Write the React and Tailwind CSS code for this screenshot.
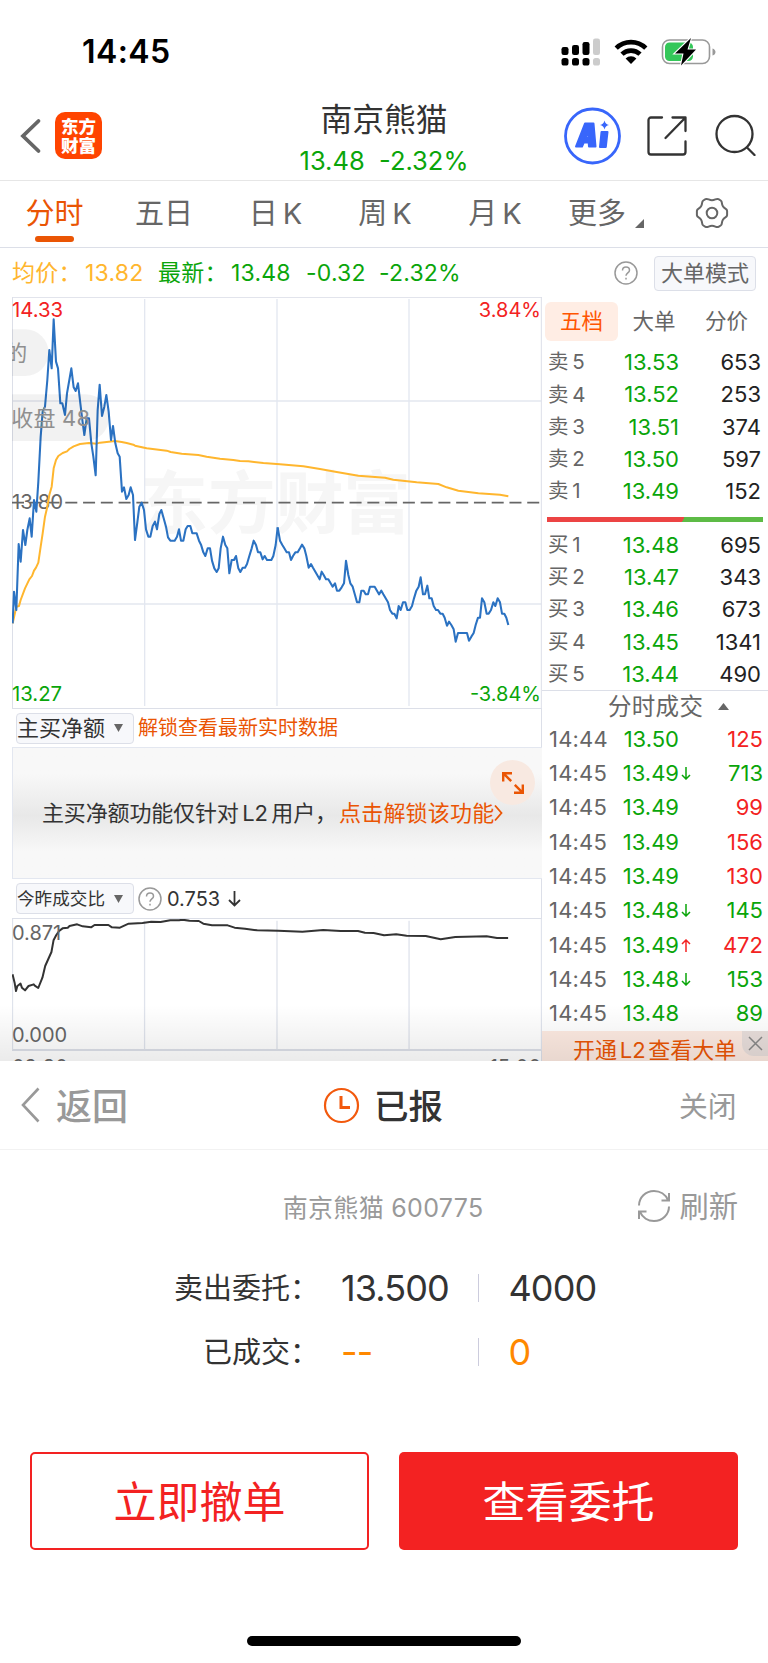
import { clsx } from 'clsx';

const periods = [
    { label: '分时', cell: 'w-[109px]', active: true },
    { label: '五日', cell: 'w-[110px]' },
    { label: '日 K', cell: 'w-[113px]' },
    { label: '周 K', cell: 'w-[106px]' },
    { label: '月 K', cell: 'w-[114px]' },
];

const asks = [
    ['卖 5', '13.53', '653'],
    ['卖 4', '13.52', '253'],
    ['卖 3', '13.51', '374'],
    ['卖 2', '13.50', '597'],
    ['卖 1', '13.49', '152'],
];

const bids = [
    ['买 1', '13.48', '695'],
    ['买 2', '13.47', '343'],
    ['买 3', '13.46', '673'],
    ['买 4', '13.45', '1341'],
    ['买 5', '13.44', '490'],
];

const trades = [
    { time: '14:44', price: '13.50', volume: '125', side: 'buy' },
    { time: '14:45', price: '13.49', volume: '713', side: 'sell', move: 'down' },
    { time: '14:45', price: '13.49', volume: '99', side: 'buy' },
    { time: '14:45', price: '13.49', volume: '156', side: 'buy' },
    { time: '14:45', price: '13.49', volume: '130', side: 'buy' },
    { time: '14:45', price: '13.48', volume: '145', side: 'sell', move: 'down' },
    { time: '14:45', price: '13.49', volume: '472', side: 'buy', move: 'up' },
    { time: '14:45', price: '13.48', volume: '153', side: 'sell', move: 'down' },
    { time: '14:45', price: '13.48', volume: '89', side: 'sell' },
];

// Intraday series, split at the lunch break
const priceMorning =
    '38,1000 42,905 49,960 56,762 62,815 69,720 76,765 82,720 89,685 95,740 102,630 109,665 115,575 122,440 128,365 135,350 142,270 148,180 155,235 161,88 168,215 174,235 181,340 187,340 195,375 201,310 208,270 214,235 221,292 227,303 234,280 241,340 247,390 253,435 260,385 267,385 274,460 280,500 287,556 293,360 299,284 306,378 313,350 319,315 326,365 333,450 339,408 346,460 353,490 359,500 366,605 372,592 379,627 386,615 392,592 399,615 405,750 412,697 418,650 425,638 432,660 438,718 445,740 451,740 458,708 465,695 471,718 478,672 484,660 491,685 498,710 504,742 511,752 524,752 531,740 537,718 543,752 550,752 557,718 563,708 571,708 577,730 590,730 597,752 603,764 610,787 616,798 623,775 630,775 636,812 643,835 650,846 656,835 662,775 669,740 676,765 682,775 688,850 695,810 702,810 708,798 715,835 721,846 728,833 735,833 741,822 748,798 755,775 761,752 768,765 774,787 781,787 788,808 794,798 801,810 814,810 820,798 827,765 833,712';
const priceAfternoon =
    '23,712 30,752 37,765 43,775 50,787 57,787 63,810 69,798 76,787 83,787 90,775 96,764 103,775 109,798 116,833 123,822 129,833 136,845 149,868 155,845 161,855 168,868 175,868 188,890 195,880 201,902 208,902 215,892 222,880 228,812 235,855 241,880 248,890 255,915 261,937 268,937 274,902 281,902 287,913 294,913 300,890 314,890 327,913 334,902 340,913 347,925 354,937 360,960 367,971 373,971 380,985 386,948 392,960 399,937 406,937 412,960 419,960 426,948 432,925 439,902 446,890 452,862 459,913 465,913 472,887 478,925 485,925 491,948 498,960 504,960 511,971 518,971 524,983 531,1007 537,995 544,1005 551,1018 557,1055 564,1029 591,1029 597,1052 604,1040 611,1029 617,1005 624,983 630,983 636,925 643,937 650,971 656,971 663,960 670,937 676,948 683,925 690,937 696,971 703,971 709,983 715,1005';
const averageMorning =
    '38,1000 49,950 57,948 62,930 75,895 88,868 96,858 102,842 108,833 115,818 122,770 128,730 135,680 142,650 148,615 155,590 161,535 168,510 175,498 188,489 201,484 208,477 221,469 240,462 267,459 290,461 300,458 320,456 345,453 365,456 380,459 400,464 405,467 440,475 500,482 512,486 545,491 595,495 620,500 660,506 700,510 720,513 745,514 790,519 840,523';
const averageAfternoon =
    '30,523 100,529 150,537 200,546 265,557 345,563 370,569 440,577 505,582 530,592 565,602 625,610 690,614 715,619';
const ratioSeries =
    '36,820 42,845 46,870 50,855 59,848 63,860 72,868 82,855 97,850 100,854 110,861 122,830 130,795 148,753 154,718 162,702 170,690 180,682 195,680 200,675 222,670 238,676 262,679 272,672 312,672 322,679 345,680 370,668 410,666 435,662 462,663 490,658 515,658 525,656 545,659 572,660 585,668 610,673 655,673 675,680 705,683 740,688 800,689 870,692 930,687 980,690 1030,690 1050,695 1075,696 1105,703 1140,700 1170,704 1225,705 1268,715 1310,708 1400,706 1430,711 1462,711';

function StatusBar() {
    return (
        <div className="flex h-[100px] items-center pl-[82px] pt-1">
            <span className="w-[479px] text-[32px] font-semibold leading-none tracking-[0.4px] text-black">14:45</span>
            <svg width="39" height="28" viewBox="0 0 39 28" className="-mt-[1px]">
                <g fill="#000">
                    <rect x="0.5" y="9" width="7" height="8" rx="2.2" />
                    <rect x="11" y="7" width="7" height="10" rx="2.2" />
                    <rect x="21.5" y="4" width="7" height="13" rx="2.2" />
                    <rect x="0.5" y="20" width="7" height="7.5" rx="2.6" />
                    <rect x="11" y="20" width="7" height="7.5" rx="2.6" />
                    <rect x="21.5" y="20" width="7" height="7.5" rx="2.6" />
                </g>
                <rect x="32" y="0.5" width="7" height="16.5" rx="2.2" fill="#ccc" />
                <rect x="32" y="20" width="7" height="7.5" rx="2.6" fill="#ccc" />
            </svg>
            <svg width="34" height="26" viewBox="0 0 34 26" className="ml-[14px]" fill="none" stroke="#000" strokeWidth="4.600">
                <path d="M2.200 9.200a21 21 0 0 1 29.600 0" />
                <path d="M8 15.200a13 13 0 0 1 18 0" />
                <path d="M17 25l-5.400-5.600a8 8 0 0 1 10.800 0z" fill="#000" stroke="none" />
            </svg>
            <svg width="56" height="28" viewBox="0 0 56 28" className="ml-[13px]">
                <rect x="1.500" y="2" width="47" height="23.500" rx="7" fill="none" stroke="#999" strokeWidth="1.600" />
                <path d="M51.500 10.500v7c2-.5 3-2 3-3.500s-1-3-3-3.500z" fill="#999" />
                <rect x="4" y="4.500" width="28" height="18.500" rx="4.500" fill="#34c759" />
                <path d="M30 0L14 15.500h8.500L20 27.500 35 11.500h-8.500z" fill="#000" stroke="#fff" strokeWidth="2.200" paintOrder="stroke" />
            </svg>
        </div>
    );
}

function Header() {
    return (
        <header className="flex h-[81px] items-start border-b border-[#e6e6e6]">
            <svg width="22" height="36" viewBox="0 0 22 36" className="ml-[20px] mt-[18px]" fill="none" stroke="#666" strokeWidth="3.800" strokeLinecap="round">
                <path d="M18.500 3L3 18l15.500 15" />
            </svg>
            <div className="ml-[13px] mt-[12px] flex h-[47px] w-[47px] flex-col items-center justify-center rounded-[10px] bg-[#ff4400] text-[17.500px] font-black leading-[19px] text-white">
                <span>东方</span>
                <span>财富</span>
            </div>
            <div className="ml-[191px] w-[182px] text-center">
                <h1 className="mt-[3px] text-[31.800px] leading-[34px] text-[#333]">南京熊猫</h1>
                <p className="mt-[9px] whitespace-pre text-[25.500px] leading-[30px] text-[#0aa50a]">13.48  -2.32%</p>
            </div>
            <svg width="58" height="58" viewBox="0 0 58 58" className="ml-[88px] mt-[7px]">
                <circle cx="29.500" cy="29" r="27" fill="none" stroke="#3866fb" strokeWidth="2.800" />
                <g fill="#3866fb" stroke="#3866fb" strokeWidth="2" strokeLinejoin="round">
                    <path fillRule="evenodd" d="M22 16.500h8.500l2 23h-6.500l-.3-4h-5l-1.700 4H13zM22.500 30.500h3.300l-.3-6.500z" />
                    <path d="M38.500 25h6l-1.700 15h-5.800z" />
                </g>
                <path d="M41.500 13.500q.8 3.700 4.500 4.500-3.700.8-4.500 4.500-.8-3.700-4.500-4.500 3.700-.8 4.500-4.500z" fill="#3866fb" />
            </svg>
            <svg width="42" height="42" viewBox="0 0 42 42" className="ml-[25px] mt-[15px]" fill="none" stroke="#333" strokeWidth="2.300" strokeLinecap="round" strokeLinejoin="round">
                <path d="M16 2.500H5a2.500 2.500 0 0 0-2.500 2.500v32a2.500 2.500 0 0 0 2.500 2.500h32a2.500 2.500 0 0 0 2.500-2.500V26.500" />
                <path d="M26.500 2.500h13V16M39.500 2.500l-20 20.500" />
            </svg>
            <svg width="42" height="42" viewBox="0 0 42 42" className="ml-[26px] mt-[14px]" fill="none" stroke="#333" strokeWidth="2.300" strokeLinecap="round">
                <circle cx="20.500" cy="20" r="18" />
                <path d="M33 33.500l7.500 7.500" />
            </svg>
        </header>
    );
}

function PeriodTabs() {
    return (
        <nav className="flex h-[67px] border-b border-[#dcdfe8] text-[29px] leading-[65px] text-[#666]">
            {periods.map((p) => (
                <div key={p.label} className={clsx('flex shrink-0 flex-col items-center', p.cell, p.active && 'text-[#ea5504]')}>
                    <span className="h-[55px] whitespace-nowrap [word-spacing:-3px]">{p.label}</span>
                    {p.active && <span className="h-[6px] w-[39px] rounded-full bg-[#ea5504]"></span>}
                </div>
            ))}
            <span className="ml-[16px]">更多</span>
            <svg width="9" height="9" viewBox="0 0 9 9" className="ml-[9px] mt-[38px]">
                <path d="M9 0v9H0z" fill="#666" />
            </svg>
            <svg width="34" height="34" viewBox="0 0 34 34" className="ml-[51px] mt-[15px]" fill="none" stroke="#666" strokeWidth="2" strokeLinejoin="round">
                <circle cx="17" cy="17" r="5.300" />
                <path d="M10.500 3.200c2.200-1.200 3.200 1 6.500 1s4.300-2.200 6.500-1l2.200 1.300c2 1.400.5 3 2.200 5.800s4 2.200 4.200 4.600v4.200c-.2 2.400-2.500 1.800-4.200 4.600s-.2 4.400-2.200 5.800l-2.200 1.300c-2.200 1.200-3.200-1-6.500-1s-4.300 2.200-6.500 1l-2.200-1.300c-2-1.400-.5-3-2.200-5.800s-4-2.200-4.200-4.600v-4.200c.2-2.400 2.500-1.800 4.200-4.600s.2-4.400 2.200-5.800z" />
            </svg>
        </nav>
    );
}

function HelpIcon({ className }) {
    return (
        <svg width="24" height="24" viewBox="0 0 24 24" className={className} fill="none" stroke="#999" strokeWidth="1.500">
            <circle cx="12" cy="12" r="11" />
            <path d="M8.500 9.500C8.500 7.300 10 6 12 6s3.500 1.300 3.500 3.200c0 2.600-3.500 2.800-3.500 5.600M12 16.800v1.800" />
        </svg>
    );
}

function QuoteSummary() {
    return (
        <div className="flex h-[49px] items-center pl-[12px] pt-px text-[23px] tracking-[0.2px] text-[#0aa50a]">
            <span className="w-[73px] whitespace-nowrap text-[#ffb62e]">均价：</span>
            <span className="w-[73px] text-[#ffb62e]">13.82</span>
            <span className="w-[73px] whitespace-nowrap">最新：</span>
            <span className="w-[75px]">13.48</span>
            <span className="w-[73px]">-0.32</span>
            <span className="w-[235px]">-2.32%</span>
            <HelpIcon />
            <button className="ml-[16px] h-[35px] w-[102px] whitespace-nowrap rounded-[4px] border border-[#dcdfe8] bg-[#f7f8fb] text-[22px] leading-none tracking-normal text-[#666]">大单模式</button>
        </div>
    );
}

function PriceChart() {
    return (
        <svg width="530" height="411" viewBox="36 21 1590 1233" className="block">
            <text x="421" y="714" fontSize="203" fontWeight="700" fill="#f6f6f6">东方财富</text>
            <g stroke="#e3e7f0" strokeWidth="4">
                <path d="M434 27V1248M831 27V1248M1227 27V1248M38 333H1624M38 942H1624" />
            </g>
            <path d="M36 22H1626M37.500 21V1254M1624 21V1254" stroke="#dcdfe8" strokeWidth="3" />
            <text x="36" y="658" fontSize="61" fill="#666">13.80</text>
            <path d="M36 638H1620" stroke="#666" strokeWidth="5.500" strokeDasharray="36 17.300" />
            <g fill="none" stroke="#ffb62e" strokeWidth="6" strokeLinejoin="round">
                <polyline points={averageMorning} />
                <polyline points={averageAfternoon} transform="translate(810 0)" />
            </g>
            <g fill="none" stroke="#2b72c2" strokeWidth="6.200" strokeLinejoin="round">
                <polyline points={priceMorning} />
                <polyline points={priceAfternoon} transform="translate(810 0)" />
            </g>
            <g fill="#000" fillOpacity="0.050">
                <path d="M36 118h40a70 70 0 0 1 0 140H36z" />
                <path d="M36 313h221a70 70 0 0 1 0 140H36z" />
            </g>
            <g fontSize="66" fill="#8f8f8f">
                <text x="16" y="213">的</text>
                <text x="34" y="409" textLength="236">收盘 48</text>
            </g>
            <text x="36" y="81" fontSize="61" fill="#f32222">14.33</text>
            <text x="1623" y="81" fontSize="60" textAnchor="end" fill="#f32222">3.84%</text>
            <text x="36" y="1232" fontSize="61" fill="#0aa50a">13.27</text>
            <text x="1623" y="1232" fontSize="60" textAnchor="end" fill="#0aa50a">-3.84%</text>
        </svg>
    );
}

function IndicatorSelect({ label, className }) {
    return (
        <div className={clsx('ml-[4px] flex h-[31px] w-[118px] items-center justify-between rounded-[4px] border border-[#dcdfe8] bg-[#f7f8fb] pr-[10px] text-[#333]', className)}>
            <span className="whitespace-nowrap leading-none">{label}</span>
            <svg width="9" height="8" viewBox="0 0 9 8">
                <path d="M0 0h9L4.500 8z" fill="#666" />
            </svg>
        </div>
    );
}

function NetBuyPanel() {
    return (
        <div className="relative flex h-[132px] items-center border-y border-l border-[#e3e7f0] bg-linear-to-b from-[#f8f8f8] from-20% via-[#e8e8e8] via-52% to-[#f8f8f8] to-80% pl-[29px] text-[22px] text-[#333]">
            <span className="whitespace-nowrap tracking-[-0.15px] [word-spacing:-2.500px]">主买净额功能仅针对 L2 用户，</span>
            <span className="absolute left-[326px] flex items-center whitespace-nowrap tracking-[0.2px] text-[#ea5504]">
                点击解锁该功能
                <svg width="9" height="18" viewBox="0 0 9 18" fill="none" stroke="#ea5504" strokeWidth="1.800">
                    <path d="M1 1.500L7.500 9 1 16.500" />
                </svg>
            </span>
            <div className="absolute right-[7px] top-[12px] flex h-[45px] w-[45px] items-center justify-center rounded-full bg-[#f8e9e1]">
                <svg width="24" height="24" viewBox="0 0 24 24" fill="none" stroke="#ea5504" strokeWidth="2.400">
                    <path d="M2.200 10.500V2.200h8.800M2.200 2.200l8 8M21.800 13.500v8.300H13M21.800 21.800l-8-8" />
                </svg>
            </div>
        </div>
    );
}

function RatioChart() {
    return (
        <svg width="530" height="131" viewBox="34.500 654 1525 393" preserveAspectRatio="none" className="block">
            <g stroke="#dfe3ec" strokeWidth="1.300">
                <path d="M416 659V1045M797 659V1045M1177 659V1045M36 654V1047M1558 654V1047" vectorEffect="non-scaling-stroke" />
            </g>
            <polyline points={ratioSeries} fill="none" stroke="#333" strokeWidth="2" strokeLinejoin="round" vectorEffect="non-scaling-stroke" />
        </svg>
    );
}

function ChartColumn() {
    return (
        <div className="ml-[12px] w-[530px] shrink-0">
            <PriceChart />
            <div className="flex h-[39px] items-center border-r border-t border-[#dcdfe8]">
                <IndicatorSelect label="主买净额" className="text-[22px]" />
                <span className="ml-[4px] whitespace-nowrap text-[20px] text-[#ea5504]">解锁查看最新实时数据</span>
            </div>
            <NetBuyPanel />
            <div className="flex h-[40px] items-center border-b border-r border-[#dcdfe8]">
                <IndicatorSelect label="今昨成交比" className="text-[17.600px]" />
                <HelpIcon className="ml-[4px]" />
                <span className="ml-[5px] text-[20px] text-[#333]">0.753</span>
                <svg width="13" height="16" viewBox="0 0 13 16" className="ml-[8px]" fill="none" stroke="#333" strokeWidth="1.800">
                    <path d="M6.500 0v14.500M1 9l5.500 5.500L12 9" />
                </svg>
            </div>
            <div className="relative">
                <RatioChart />
                <span className="absolute left-0 top-[2px] text-[20px] leading-6 text-[#666]">0.871</span>
                <span className="absolute bottom-[3px] left-0 text-[20px] leading-6 text-[#666]">0.000</span>
            </div>
            <div className="-mt-px flex justify-between border-r border-t-2 border-[#dcdfe8] pt-[4px] text-[20px] leading-6 text-[#666]">
                <span>09:30</span>
                <span>15:00</span>
            </div>
        </div>
    );
}

function DepthRow({ row }) {
    const [label, price, volume] = row;
    return (
        <div className="flex h-[32.300px] items-center pl-[6px] pr-[7px] text-[22px]">
            <span className="w-[50px] whitespace-pre text-[20.500px] text-[#666] [word-spacing:-2px]">{label}</span>
            <span className="w-[81px] text-right text-[#0aa50a]">{price}</span>
            <span className="flex-1 text-right text-[#222]">{volume}</span>
        </div>
    );
}

function MoveArrow({ move }) {
    return (
        <svg width="10" height="13" viewBox="0 0 10 13" fill="none" stroke={move === 'up' ? '#f32222' : '#0aa50a'} strokeWidth="1.500">
            {move === 'up' ? <path d="M5 13V1M1 5l4-4 4 4" /> : <path d="M5 0v12M1 8l4 4 4-4" />}
        </svg>
    );
}

function OrderBook() {
    return (
        <aside className="w-[226px] shrink-0">
            <div className="mt-[5px] flex h-[39px] items-center pl-[3px] text-[21.500px] leading-none text-[#666]">
                <span className="flex h-[39px] w-[73px] items-center justify-center rounded-[6px] bg-[#ffede4] text-[#ff5500]">五档</span>
                <span className="w-[72px] text-center">大单</span>
                <span className="w-[73px] text-center">分价</span>
            </div>
            <div className="mt-[5.500px]">
                {asks.map((row) => (
                    <DepthRow key={row[0]} row={row} />
                ))}
            </div>
            <div className="ml-[5px] mt-[9px] h-[5px] w-[216px] bg-linear-115 from-[#ec4444] from-[63%] to-[#5dbb46] to-[63%]"></div>
            <div className="mt-[7px]">
                {bids.map((row) => (
                    <DepthRow key={row[0]} row={row} />
                ))}
            </div>
            <div className="-mt-[0.500px] flex h-[32px] items-center border-t border-[#dcdfe8] pl-[66px] text-[23.500px] text-[#666]">
                <span className="whitespace-nowrap tracking-[0.3px]">分时成交</span>
                <svg width="11" height="7" viewBox="0 0 11 7" className="ml-[15px]">
                    <path d="M5.500 0L11 7H0z" fill="#666" />
                </svg>
            </div>
            {trades.map((t, i) => (
                <div key={i} className="flex h-[34.350px] items-center pl-[7px] pr-[5px] text-[22px]">
                    <span className="w-[60px] tracking-[0.2px] text-[#666]">{t.time}</span>
                    <span className="w-[70px] text-right text-[#0aa50a]">{t.price}</span>
                    <span className="ml-[2px] w-[10px]">{t.move && <MoveArrow move={t.move} />}</span>
                    <span className={clsx('flex-1 text-right', t.side === 'buy' ? 'text-[#f32222]' : 'text-[#0aa50a]')}>{t.volume}</span>
                </div>
            ))}
            <div className="relative h-[40px] bg-[#fdeae1] pl-[31px] pt-[1px] text-[22px] leading-[36px] text-[#ea5504]">
                <span className="whitespace-nowrap [word-spacing:-3.500px]">开通 L2 查看大单</span>
                <div className="absolute right-0 top-0 flex h-[25px] w-[26px] items-center justify-center rounded-bl-[12px] bg-[#e8dedb]">
                    <svg width="15" height="15" viewBox="0 0 15 15" stroke="#888" strokeWidth="1.500">
                        <path d="M1 1l13 13M14 1L1 14" />
                    </svg>
                </div>
            </div>
        </aside>
    );
}

function OrderSheet() {
    return (
        <section className="flex flex-col bg-white">
            <div className="flex h-[89px] items-center border-b border-[#f2f2f2] text-[#999]">
                <svg width="20" height="36" viewBox="0 0 20 36" className="ml-[20px]" fill="none" stroke="#999" strokeWidth="2.600">
                    <path d="M18.500 1.500L3 18l15.500 16.500" />
                </svg>
                <span className="ml-[16px] mt-[3px] w-[267px] text-[36px] font-medium">返回</span>
                <svg width="37" height="37" viewBox="0 0 37 37" fill="none" stroke="#f2590d" strokeWidth="2.200">
                    <circle cx="18.500" cy="18.500" r="16.500" />
                    <path d="M18 9v11.500h9" strokeWidth="3" />
                </svg>
                <span className="ml-[14px] mt-[3px] w-[305px] text-[34.500px] font-medium text-[#333]">已报</span>
                <span className="mt-[3px] text-[28.800px]">关闭</span>
            </div>
            <div className="flex h-[114px] items-center justify-end pr-[30px] text-[#999]">
                <span className="mr-[154px] mt-[4px] whitespace-nowrap text-[25px] tracking-[0.3px]">南京熊猫 600775</span>
                <svg width="34" height="34" viewBox="0 0 34 34" className="-mt-[3px]" fill="none" stroke="#999" strokeWidth="2">
                    <path d="M2 16.500C2 8.500 8.500 2 17 2c6 0 11.500 3.500 14 9M32 4v7.500h-7.500" />
                    <path d="M32 17.500C32 25.500 25.500 32 17 32c-6 0-11.500-3.500-14-9M2 30v-7.500h7.500" />
                </svg>
                <span className="ml-[8px] text-[29.300px]">刷新</span>
            </div>
            <div className="mt-[-8px] flex h-[64px] items-center text-[36px] tracking-[-0.9px] text-[#333]">
                <span className="mt-[2px] w-[319px] whitespace-nowrap text-right text-[29px] tracking-normal">卖出委托：</span>
                <span className="ml-[22px] w-[136.500px]">13.500</span>
                <span className="h-[28px] w-px bg-[#ccccdd]"></span>
                <span className="ml-[30px]">4000</span>
            </div>
            <div className="flex h-[64px] items-center text-[36px] tracking-[-0.9px] text-[#ff8800]">
                <span className="mt-[2px] w-[319px] whitespace-nowrap text-right text-[29px] tracking-normal text-[#333]">已成交：</span>
                <span className="ml-[22px] w-[136.500px]">--</span>
                <span className="h-[28px] w-px bg-[#ccccdd]"></span>
                <span className="ml-[30px]">0</span>
            </div>
            <div className="mt-[68px] flex gap-[30px] px-[30px] text-[43px]">
                <button className="h-[98px] w-[339px] rounded-[5px] border-2 border-[#f32222] pt-[2px] leading-none text-[#f32222]">立即撤单</button>
                <button className="h-[98px] w-[339px] rounded-[5px] bg-[#f32222] pt-[2px] leading-none text-white">查看委托</button>
            </div>
            <div className="mt-[86px] h-[10px] w-[274px] self-center rounded-full bg-black"></div>
        </section>
    );
}

export default function App() {
    return (
        <div className="h-[1663px] w-[768px] overflow-hidden bg-white font-['Inter','Noto_Sans_CJK_SC',sans-serif]">
            <StatusBar />
            <Header />
            <PeriodTabs />
            <QuoteSummary />
            <div className="relative h-[764px] overflow-hidden">
                <div className="flex">
                    <ChartColumn />
                    <OrderBook />
                </div>
                <div className="absolute inset-x-0 bottom-0 h-[56px] bg-linear-to-b from-black/0 to-black/8"></div>
            </div>
            <OrderSheet />
        </div>
    );
}
